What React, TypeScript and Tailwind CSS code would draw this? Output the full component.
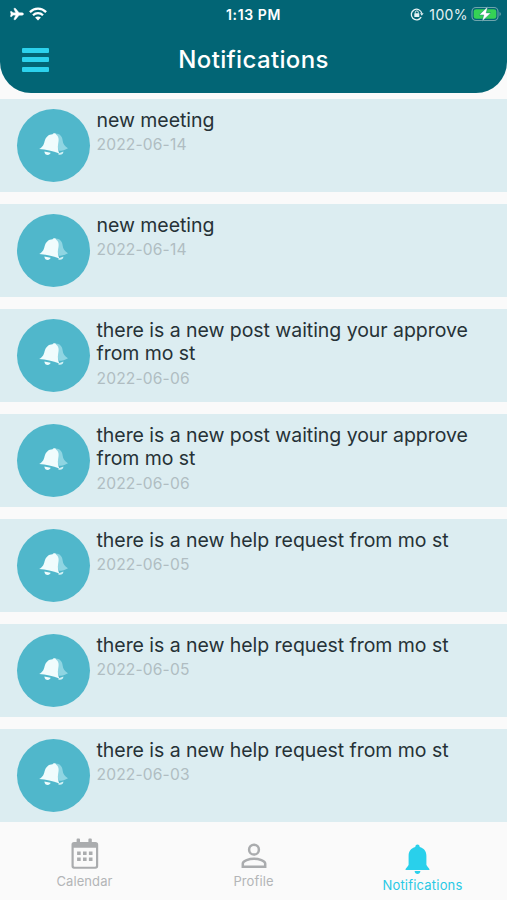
import { IoAirplane } from "react-icons/io5";

interface Notification {
    id: number
    text: string
    date: string
}

const notifications: Notification[] = [
    { id: 1, text: "new meeting", date: "2022-06-14" },
    { id: 2, text: "new meeting", date: "2022-06-14" },
    { id: 3, text: "there is a new post waiting your approve from mo st", date: "2022-06-06" },
    { id: 4, text: "there is a new post waiting your approve from mo st", date: "2022-06-06" },
    { id: 5, text: "there is a new help request from mo st", date: "2022-06-05" },
    { id: 6, text: "there is a new help request from mo st", date: "2022-06-05" },
    { id: 7, text: "there is a new help request from mo st", date: "2022-06-03" },
]

const WifiIcon = () => (
    <svg width="18" height="14" viewBox="0 0 18 14" fill="none" stroke="white" strokeWidth="2.3">
        <path d="M0.9 5.1C5.4 0.5 12.6 0.5 17.1 5.1" />
        <path d="M4 8.2C6.8 5.4 11.2 5.4 14 8.2" />
        <path d="M9 13.4L6.1 10.5C7.7 9 10.3 9 11.9 10.5Z" fill="white" stroke="none" />
    </svg>
)

const RotationLockIcon = () => (
    <svg width="14" height="14" viewBox="0 0 14 14" fill="none" stroke="#e6f2f4" strokeWidth="1.3">
        <path d="M11.2 10.2A5.3 5.3 0 1 1 11.8 6.4" />
        <path d="M10 6.2H13.6L11.8 8.8Z" fill="#e6f2f4" stroke="none" />
        <rect x="4.3" y="6.3" width="5" height="3.7" rx="0.5" fill="#e6f2f4" stroke="none" />
        <path d="M5.3 6.5V5.4A1.5 1.5 0 0 1 8.3 5.4V6.5" strokeWidth="1" />
    </svg>
)

const BatteryIcon = () => (
    <svg width="31" height="16" viewBox="0 0 31 16">
        <rect x="1" y="1.5" width="26" height="13" rx="4" fill="none" stroke="#6fa5ad" strokeWidth="1.1" />
        <rect x="2.7" y="3.2" width="22.6" height="9.6" rx="2.4" fill="#35d155" />
        <path d="M28.5 6V10C30.3 9.4 30.3 6.6 28.5 6Z" fill="#6fa5ad" />
        <path d="M16.8 0.6L8.2 8.9H12.8L11 15.4L19.8 6.9H15.2Z" fill="white" stroke="#02697a" strokeWidth="0.4" />
    </svg>
)

// two overlapping bells, the back one is faded
const BellsIcon = () => (
    <svg width="30" height="26" viewBox="0 0 30 26">
        <path d="M15.5 1.6C20.5 1.2 23.2 4.2 23.6 8.2C24 12 26 14.6 29 16.2C26.6 17.8 23 18.8 19.6 18.8Z" fill="#8fd5e2" />
        <path d="M19.4 21.4L24.4 19.6C24.4 22.2 22 23.4 19.4 22.6Z" fill="#d2f0f4" />
        <path d="M15 1.2C16.2 1 17 1.6 17.2 2.8C20.2 4.8 19.9 8.6 19.1 12C18.6 15.4 18.9 18.4 20.4 21.6C13.6 18.8 7 17.4 0.2 17C4.2 14.6 4.8 12.4 5.6 9.2C6.8 4.8 9.6 2.3 13.6 2.2C13.9 1.6 14.3 1.3 15 1.2Z" fill="#f0fcfd" />
        <path d="M5.4 19.4L11.6 20.8C10.8 24 5.4 23.6 5.4 19.4Z" fill="#f0fcfd" />
    </svg>
)

const CalendarIcon = () => (
    <svg width="28" height="32" viewBox="0 0 28 32" fill="#aaacae">
        <path fillRule="evenodd" d="M3 4H5.6V1.4Q5.6 0.5 6.5 0.5H8.1Q9 0.5 9 1.4V4H17.4V1.4Q17.4 0.5 18.3 0.5H19.9Q20.8 0.5 20.8 1.4V4H24.4Q27.2 4 27.2 6.8V28Q27.2 30.8 24.4 30.8H3Q0.5 30.8 0.5 28V6.8Q0.5 4 3 4ZM2.7 9.8V27.7Q2.7 28.7 3.7 28.7H24Q25 28.7 25 27.7V9.8Z" />
        <path d="M6.1 13.4H9.7V17H6.1ZM12 13.4H15.6V17H12ZM17.9 13.4H21.5V17H17.9ZM6.1 19.4H9.7V23H6.1ZM12 19.4H15.6V23H12ZM17.9 19.4H21.5V23H17.9Z" />
    </svg>
)

const ProfileIcon = () => (
    <svg width="26" height="26" viewBox="0 0 26 26" fill="none" stroke="#aaacae" strokeWidth="2.5">
        <circle cx="13" cy="6.7" r="4.9" />
        <path d="M1.8 23.8V20.6C1.8 17.8 8.2 15.7 13 15.7S24.2 17.8 24.2 20.6V23.8Z" />
    </svg>
)

const BellIcon = () => (
    <svg width="25" height="31" viewBox="0 0 25 31" fill="#29d0eb">
        <path d="M12.5 0.5C14 0.5 14.7 1.7 14.7 3.1C18.8 4.1 21.4 7.4 21.4 11.7V20.8C21.4 22.2 24.6 24 24.6 26H0.4C0.4 24 3.6 22.2 3.6 20.8V11.7C3.6 7.4 6.2 4.1 10.3 3.1C10.3 1.7 11 0.5 12.5 0.5Z" />
        <path d="M9.6 27.1H15.4C15.4 31 9.6 31 9.6 27.1Z" />
    </svg>
)

const NotificationItem = ({ item }: { item: Notification }) => {
    return (
        <div className="flex h-[93px] shrink-0 bg-[#dcedf1] pl-[17px] pt-[10px]">
            <div className="flex size-[73px] shrink-0 items-center justify-center rounded-full bg-[#50b7cb]">
                <BellsIcon />
            </div>
            <div className="w-[390px] pl-[6.5px] pt-[0.5px]">
                <p className="text-[19.5px] leading-[23.3px] tracking-[-0.05px] text-[#263237]">{item.text}</p>
                <p className="mt-[1px] text-[15.6px] leading-[23px] tracking-[0.15px] text-[#b0bdc2]">{item.date}</p>
            </div>
        </div>
    )
}

const App = () => {
    return (
        <div className="flex h-[900px] w-[507px] flex-col overflow-hidden bg-[#fafafa] font-['Inter',sans-serif]">
            <header className="h-[92.5px] shrink-0 rounded-b-[31px] bg-[#026575]">
                <div className="grid h-[28px] grid-cols-3 items-center text-white">
                    <div className="flex items-center gap-[5px] pl-[10px]">
                        <IoAirplane size={14} stroke="white" strokeWidth={16} />
                        <WifiIcon />
                    </div>
                    <span className="text-center text-[14px] font-semibold tracking-[0.6px]">1:13 PM</span>
                    <div className="flex items-center justify-end pr-[5px]">
                        <RotationLockIcon />
                        <span className="ml-[5px] mr-[3px] text-[14px] tracking-[0.4px] text-[#e6f2f4]">100%</span>
                        <BatteryIcon />
                    </div>
                </div>
                <div className="grid h-[63px] grid-cols-[100px_1fr_100px] items-center">
                    <button className="ml-[22px] flex w-[27px] flex-col gap-[4.5px]">
                        <span className="h-[5px] w-full rounded-[1px] bg-[#2cd2ed]" />
                        <span className="h-[5px] w-full rounded-[1px] bg-[#2cd2ed]" />
                        <span className="h-[5px] w-full rounded-[1px] bg-[#2cd2ed]" />
                    </button>
                    <h1 className="text-center text-[24px] font-medium tracking-[0.35px] text-white">Notifications</h1>
                </div>
            </header>

            <main className="flex flex-col gap-[12px] pt-[6px]">
                {notifications.map((item) => (
                    <NotificationItem key={item.id} item={item} />
                ))}
            </main>

            <nav className="grid flex-1 grid-cols-3 text-[13px] leading-[16px] text-[#b3b5b7]">
                <div className="flex flex-col items-center pt-[16px]">
                    <CalendarIcon />
                    <span className="mt-[3px] tracking-[0.1px]">Calendar</span>
                </div>
                <div className="flex flex-col items-center pt-[21px]">
                    <ProfileIcon />
                    <span className="mt-[4px] tracking-[0.1px]">Profile</span>
                </div>
                <div className="flex flex-col items-center pt-[22px] text-[#29c9e5]">
                    <div className="pr-[10px]">
                        <BellIcon />
                    </div>
                    <span className="mt-[2px] tracking-[0.2px]">Notifications</span>
                </div>
            </nav>
        </div>
    )
}

export default App
